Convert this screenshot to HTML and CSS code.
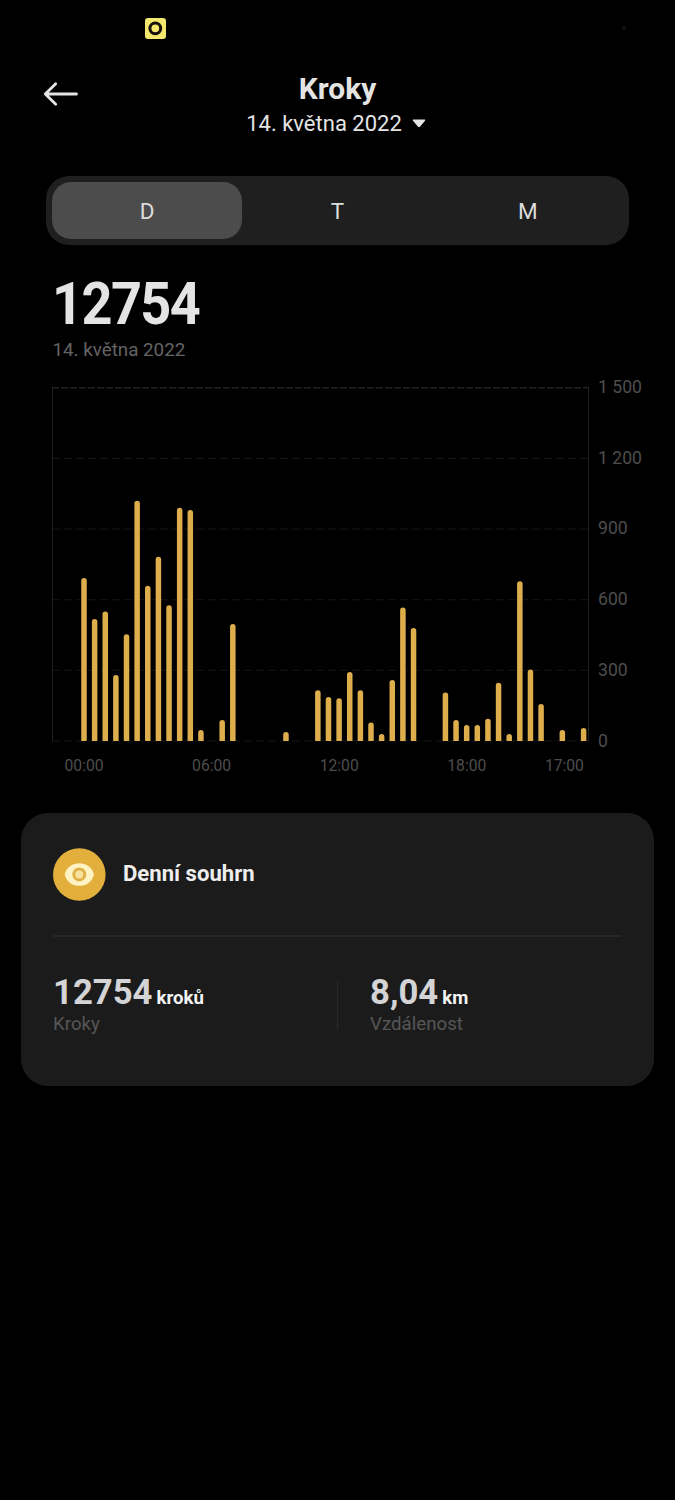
FILE: index.html
```html
<!DOCTYPE html>
<html lang="cs">
    <head>
        <meta charset="utf-8">
        <title>Kroky</title>
        <link rel="stylesheet" href="styles.css">
    </head>
    <body>
        <div class="status">
            <svg class="camera" width="21" height="21" viewBox="0 0 21 21">
                <rect width="21" height="21" rx="3" fill="#f3e76c" />
                <circle cx="10.3" cy="10.3" r="5.4" fill="none" stroke="#15110a" stroke-width="3" />
            </svg>
            <div class="sensor"></div>
        </div>
        <div class="header">
            <svg class="back" width="36" height="26" viewBox="0 0 36 26">
                <path d="M12.7 2.7 L2.3 13 L12.7 23.3 M2.3 13 H33.5" />
            </svg>
            <div class="heading">
                <h1>Kroky</h1>
                <div class="date">14. května 2022
                    <svg width="14" height="9" viewBox="0 0 14 9"><path d="M1.2 0.6 H12.8 Q13.6 0.9 13 1.7 L8 7.7 Q7 8.6 6 7.7 L1 1.7 Q0.4 0.9 1.2 0.6 Z" /></svg>
                </div>
            </div>
        </div>
        <div class="tabs">
            <div class="tab active">D</div>
            <div class="tab">T</div>
            <div class="tab">M</div>
        </div>
        <div class="total">12754</div>
        <div class="total_date">14. května 2022</div>
        <div class="chart">
            <svg class="plot" width="537" height="355" viewBox="0 0 537 355">
                <path class="top" d="M0 0.8 H537" />
                <path class="line" d="M0 71.5 H537 M0 142 H537 M0 212.8 H537 M0 283.3 H537 M0 354 H537" />
                <path class="side" d="M0.5 1 V354 M536.5 1 V354" />
                <path class="bars" id="bars" />
            </svg>
            <div class="scale">
                <div>1 500</div>
                <div>1 200</div>
                <div>900</div>
                <div>600</div>
                <div>300</div>
                <div>0</div>
            </div>
        </div>
        <div class="hours">
            <div>00:00</div>
            <div>06:00</div>
            <div>12:00</div>
            <div>18:00</div>
            <div class="last">17:00</div>
        </div>
        <div class="card">
            <div class="card_head">
                <svg width="53" height="53" viewBox="0 0 53 53">
                    <circle cx="26.3" cy="26.5" r="26.3" fill="#e2ae3c" />
                    <path d="M11.7 26.4 C13.5 18.5 20 15.2 26.3 15.2 C32.6 15.2 39.1 18.5 40.9 26.4 C39.1 34.4 32.6 37.8 26.3 37.8 C20 37.8 13.5 34.4 11.7 26.4 Z" fill="#fff3c4" />
                    <circle cx="26.3" cy="26.4" r="5.5" fill="#f7e2a0" stroke="#dfb146" stroke-width="3" />
                </svg>
                <h2>Denní souhrn</h2>
            </div>
            <div class="stats">
                <div class="stat">
                    <div class="value">12754<span>kroků</span></div>
                    <div class="label">Kroky</div>
                </div>
                <div class="divider"></div>
                <div class="stat">
                    <div class="value">8,04<span>km</span></div>
                    <div class="label">Vzdálenost</div>
                </div>
            </div>
        </div>
        <script type="text/javascript" src="chart.js"></script>
    </body>
</html>
```
FILE: styles.css
```css
body {
    margin: 0;
    background: #000;
    color: #e4e4e4;
    font-family: Roboto, sans-serif;
}

svg {
    display: block;
}

.status {
    display: flex;
    justify-content: space-between;
    height: 53px;
    padding: 18px 49px 0 145px;
    box-sizing: border-box;
}

.sensor {
    width: 4px;
    height: 4px;
    margin-top: 8px;
    border-radius: 50%;
    background: #101012;
}

.header {
    display: grid;
    grid-template-columns: 100px 1fr 100px;
    padding-top: 18px;
    height: 105px;
}

.back {
    margin: 10px 0 0 43px;
    fill: none;
    stroke: #e4e4e4;
    stroke-width: 2.8;
    stroke-linecap: round;
    stroke-linejoin: round;
}

.heading {
    text-align: center;
}

h1 {
    margin: 0;
    font-size: 29.9px;
    line-height: 36px;
}

.date {
    display: flex;
    justify-content: center;
    align-items: center;
    gap: 10px;
    font-size: 22px;
    line-height: 33px;
    margin-right: 3px;
}

.date svg {
    fill: #e4e4e4;
}

.tabs {
    display: flex;
    margin: 0 46px;
    padding: 6px;
    height: 69px;
    box-sizing: border-box;
    border-radius: 23px;
    background: #1f1f1f;
}

.tab {
    flex: 1;
    border-radius: 19px;
    color: #dcdcdc;
    font-size: 22.5px;
    line-height: 59px;
    text-align: center;
}

.active {
    background: #4c4c4c;
}

.total {
    margin: 29px 0 0 52px;
    font-size: 60px;
    font-weight: bold;
    line-height: 60px;
    letter-spacing: -1.7px;
    transform: scaleX(0.9);
    transform-origin: left;
}

.total_date {
    margin: 4px 0 0 52.5px;
    color: #646464;
    font-size: 18.8px;
    line-height: 24px;
}

.chart {
    display: flex;
    margin: 25px 0 0 52px;
    gap: 9px;
}

.plot path {
    fill: none;
    stroke-width: 1;
}

.plot .top {
    stroke: #333;
    stroke-dasharray: 7 2;
}

.plot .line {
    stroke: #161616;
    stroke-dasharray: 8 4;
}

.plot .side {
    stroke: #202020;
}

.plot .bars {
    fill: #ddae4b;
}

.scale {
    margin-top: -35px;
    color: #4d4d4d;
    font-size: 17.6px;
    line-height: 70.7px;
    height: 390px;
}

.hours {
    display: grid;
    grid-template-columns: repeat(4, 127.6px) 1fr;
    margin: 14px 0 0 64.5px;
    color: #4d4d4d;
    font-size: 15.7px;
    line-height: 20px;
}

.last {
    margin-left: -30px;
}

.card {
    margin: 37px 21px 0;
    padding: 35px 32px 0;
    height: 273px;
    box-sizing: border-box;
    border-radius: 27px;
    background: #1b1b1c;
}

.card_head {
    display: flex;
    align-items: center;
    gap: 17px;
    padding-bottom: 34px;
    border-bottom: 2px solid #27272a;
}

h2 {
    margin: -3px 0 0;
    color: #eee;
    font-size: 22.1px;
    line-height: 26px;
}

.stats {
    display: flex;
    padding-top: 35px;
}

.stat {
    flex: 1;
}

.value {
    color: #d4d3d5;
    font-size: 34.7px;
    font-weight: bold;
    line-height: 40px;
}

.value span {
    margin-left: 4px;
    color: #f4f4f4;
    font-size: 18.6px;
}

.label {
    margin-top: -6px;
    color: #565656;
    font-size: 18.7px;
    line-height: 24px;
}

.divider {
    width: 1px;
    height: 48px;
    margin: 10px 32px 0 0;
    background: #29292a;
}

.stat:first-child {
    flex: 0 0 284px;
}
```
FILE: chart.js
```js
// steps per half hour
var steps = [
    692, 518, 550, 280, 453, 1020, 659, 782, 576, 990, 981, 47,
    0, 89, 497, 0, 0, 0, 0, 38, 0, 0, 215, 187,
    181, 293, 215, 79, 30, 259, 567, 480, 0, 0, 206, 89,
    68, 68, 94, 247, 30, 678, 304, 157, 0, 47, 0, 55
];

var bottom = 354;
var radius = 2.75;
var d = "";
steps.forEach(function(value, i) {
    if (!value) return;
    var x = 32 + i * 10.63 - radius;
    var y = bottom - value * 353.3 / 1500 + radius;
    // rounded top, flat bottom
    d += "M" + x + " " + bottom + "V" + y +
        "a" + radius + " " + radius + " 0 0 1 " + radius * 2 + " 0V" + bottom + "Z";
});
document.getElementById("bars").setAttribute("d", d);
```
